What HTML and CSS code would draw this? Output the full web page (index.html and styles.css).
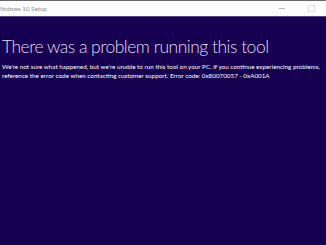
FILE: index.html
```html
<!DOCTYPE html>
<html>
<head>
<meta charset="utf-8">
<link rel="stylesheet" href="styles.css">
</head>
<body>
<div class="window">
  <div class="titlebar">
    <span class="title">Windows 10 Setup</span>
    <div class="controls">
      <span class="min"></span>
      <span class="max"></span>
    </div>
  </div>
  <div class="content">
    <h1 class="heading">There was a problem running this tool</h1>
    <p class="msg">We're not sure what happened, but we're unable to run this tool on your PC. If you continue experiencing problems, reference the error code when contacting customer support. Error code: 0x80070057 - 0xA001A</p>
  </div>
</div>
</body>
</html>
```
FILE: styles.css
```css
html, body {
  margin: 0;
  padding: 0;
  width: 326px;
  height: 245px;
  overflow: hidden;
  background: #160050;
}
.window {
  display: flex;
  flex-direction: column;
  height: 245px;
}
.titlebar {
  height: 15px;
  background: #fdfdfd;
  border-top: 1px solid #6a6a6a;
  border-bottom: 1px solid #5b3fa0;
  display: flex;
  align-items: center;
  justify-content: space-between;
  overflow: hidden;
}
.title {
  font-family: "Lato", sans-serif;
  font-size: 6.2px;
  color: #8a8a8a;
  margin-left: -5px;
  white-space: nowrap;
}
.controls {
  display: flex;
  align-items: center;
  gap: 23px;
  margin-right: 11px;
}
.min {
  display: block;
  width: 6px;
  height: 1px;
  background: #b8b8b8;
}
.max {
  display: block;
  width: 5px;
  height: 5px;
  border: 1px solid #e0e0e0;
}
.content {
  flex: 1;
  padding: 19px 0 0 2px;
}
.heading {
  margin: 0;
  font-family: "Lato", sans-serif;
  font-weight: 300;
  font-size: 17.5px;
  letter-spacing: -0.5px;
  line-height: 22px;
  color: #e2dcf2;
  white-space: nowrap;
}
.msg {
  margin: 4px 0 0;
  font-family: "Lato", sans-serif;
  font-size: 6.3px;
  line-height: 9px;
  color: #ffffff;
  width: 324px;
}
```
